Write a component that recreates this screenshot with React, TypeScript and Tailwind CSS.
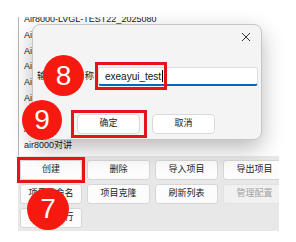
import React from "react";

const items = [
  "Air8000-LVGL-TEST22_2025080",
  "Air8000-LVGL-DEMO_202507",
  "Air8000-LVGL-TEST21_202507",
  "Air8000-MQTT-TEST_202506",
  "Air8000-HTTP-TEST_202506",
  "Air8000-GPS-TEST_202505",
  "Air8000-LBS-TEST_202505",
  "Air8000-UART-TEST_202504",
  "air8000对讲",
];

const buttons: { label: string; disabled?: boolean }[] = [
  { label: "创建" },
  { label: "删除" },
  { label: "导入项目" },
  { label: "导出项目" },
  { label: "项目重命名" },
  { label: "项目克隆" },
  { label: "刷新列表" },
  { label: "管理配置", disabled: true },
  { label: "模拟器运行" },
];

const font = { fontFamily: '"Liberation Sans", "Noto Sans CJK SC", sans-serif' };

function Badge({ n, cls }: { n: string; cls: string }) {
  return (
    <div
      className={`absolute rounded-full bg-[#f5190f] text-white flex items-center justify-center text-[28px] leading-none ${cls}`}
      style={{ fontFamily: '"Liberation Sans", Arial, sans-serif' }}
    >
      {n}
    </div>
  );
}

export default function App() {
  return (
    <div className="relative w-[296px] h-[242px] bg-white overflow-hidden" style={font}>
      <div className="pt-[17px] pl-[18px]">
        <div className="w-[261px] h-[214px] bg-[#e8e8e8] flex flex-col overflow-hidden">
          <div className="h-[139px] bg-white border-l border-[#b4b4b4] overflow-hidden pl-[5px] shrink-0">
            <div className="mt-[-5px] text-[9px] leading-[15.75px] text-[#1a1a1a]">
              {items.map((t) => (
                <div key={t} className="whitespace-nowrap">
                  {t}
                </div>
              ))}
            </div>
          </div>
          <div className="pl-[2px] pt-[4px] grid grid-cols-[62px_63px_63px_63px] gap-x-[5px] gap-y-[4px]">
            {buttons.map((b) => (
              <div
                key={b.label}
                className={`h-[20px] rounded-[3px] border flex items-center justify-center text-[9px] whitespace-nowrap ${
                  b.disabled
                    ? "bg-[#f1f1f1] border-[#e2e2e2] text-[#a3a3a3]"
                    : "bg-[#fcfcfc] border-[#d6d6d6] text-[#222]"
                }`}
              >
                {b.label}
              </div>
            ))}
          </div>
        </div>
      </div>

      {/* Dialog */}
      <div className="absolute left-[32px] top-[24px] w-[230px] h-[116px] rounded-[8px] bg-[#f4f4f4] border border-[#c6c6c6] shadow-[0_8px_22px_rgba(0,0,0,0.28)] flex flex-col">
        <div className="h-[20px] flex justify-end items-center pr-[10px] pt-[4px]">
          <svg width="10" height="10" viewBox="0 0 10 10">
            <path d="M1 1L9 9M9 1L1 9" stroke="#333" strokeWidth="1" />
          </svg>
        </div>
        <div className="mt-[22px] flex items-center pl-[4px] pr-[3px]">
          <div className="w-[61px] text-[9.5px] text-[#222] whitespace-nowrap">输入项目名称</div>
          <div className="flex-1 h-[19px] bg-white rounded-[3px] border border-[#e0e0e0] border-b-[2px] border-b-[#0067c0] flex items-center pl-[6px] text-[10px] text-[#111]">
            exeayui_test
            <span className="inline-block w-[1px] h-[12px] bg-black ml-[1px]" />
          </div>
        </div>
        <div className="mt-[28px] flex gap-[12px] pl-[44px]">
          <div className="w-[63px] h-[20px] bg-white rounded-[4px] border border-[#d9d9d9] flex items-center justify-center text-[9px] text-[#222]">
            确定
          </div>
          <div className="w-[63px] h-[20px] bg-white rounded-[4px] border border-[#d9d9d9] flex items-center justify-center text-[9px] text-[#222]">
            取消
          </div>
        </div>
      </div>

      {/* Annotation boxes */}
      <div className="absolute left-[95px] top-[62px] w-[72px] h-[28px] border-[3px] border-[#e8131a]" />
      <div className="absolute left-[71px] top-[110px] w-[76px] h-[28px] border-[3px] border-[#e8131a]" />
      <div className="absolute left-[17px] top-[157px] w-[68px] h-[26px] border-[3px] border-[#e8131a]" />

      <Badge n="8" cls="left-[43px] top-[55px] w-[41px] h-[41px]" />
      <Badge n="9" cls="left-[22px] top-[100px] w-[40px] h-[40px]" />
      <Badge n="7" cls="left-[27px] top-[188px] w-[42px] h-[42px]" />
    </div>
  );
}
